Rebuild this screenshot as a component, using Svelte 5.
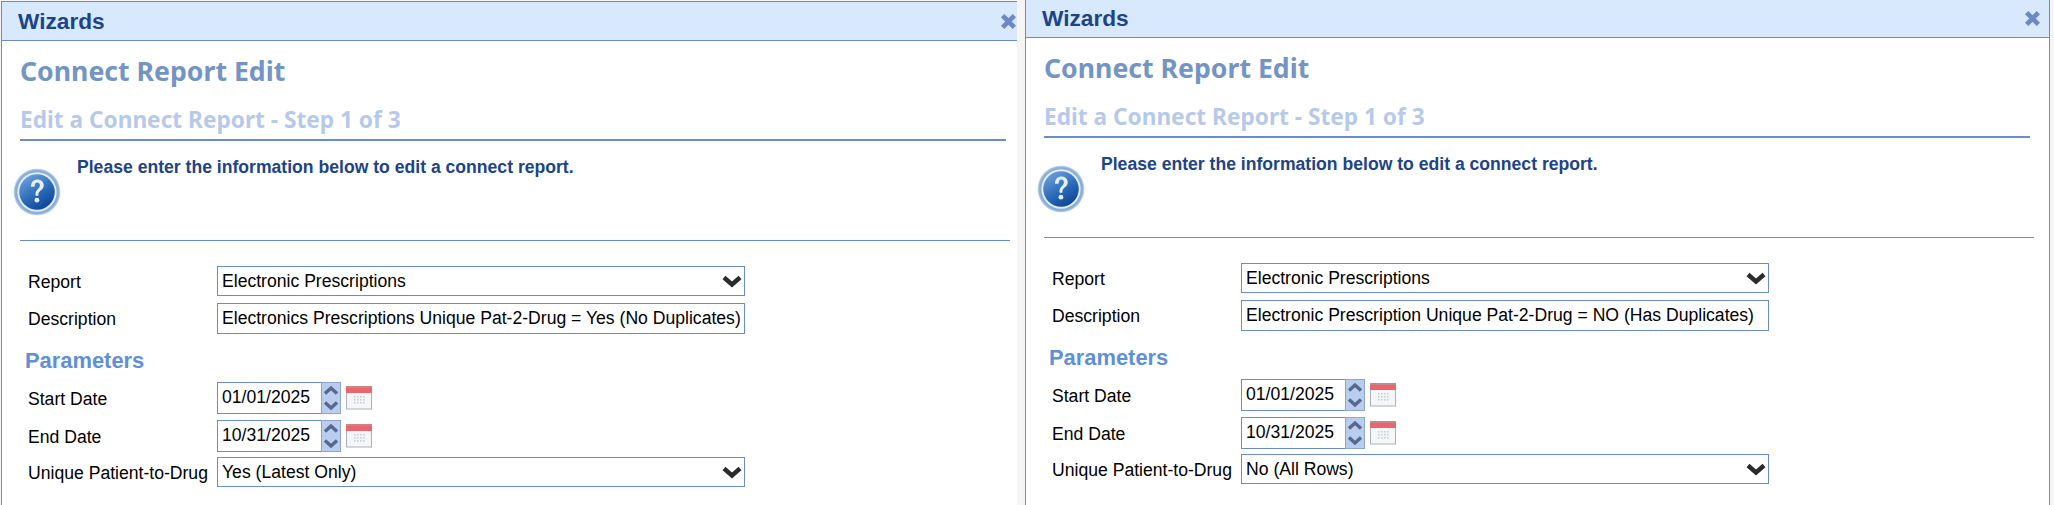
<script>
  const panels = [
    {
      description: 'Electronics Prescriptions Unique Pat-2-Drug = Yes (No Duplicates)',
      unique: 'Yes (Latest Only)',
      shifted: false
    },
    {
      description: 'Electronic Prescription Unique Pat-2-Drug = NO (Has Duplicates)',
      unique: 'No (All Rows)',
      shifted: true
    }
  ];
</script>

{#snippet chevron()}
  <svg class="chevron" viewBox="0 0 20 14" width="20" height="14">
    <path d="M2 3.5 L10 10.5 L18 3.5" fill="none" stroke="#2b2b2b" stroke-width="4.4" />
  </svg>
{/snippet}

{#snippet dateField(label, value, rowClass)}
  <div class="row {rowClass}">
    <span class="label">{label}</span>
    <div class="date">
      <span class="date-value">{value}</span>
      <div class="spin">
        <span class="spin-btn">
          <svg viewBox="0 0 16 14" width="16" height="14"><path d="M2 10.5 L8 5 L14 10.5" fill="none" stroke="#55698f" stroke-width="3.4" /></svg>
        </span>
        <span class="spin-btn">
          <svg viewBox="0 0 16 14" width="16" height="14"><path d="M2 3.5 L8 9 L14 3.5" fill="none" stroke="#55698f" stroke-width="3.4" /></svg>
        </span>
      </div>
    </div>
    <svg class="calendar" viewBox="0 0 26 24" width="26" height="24">
      <rect x="0.5" y="0.5" width="25" height="22.5" fill="#f4f6f8" stroke="#a9b2ba" />
      <rect x="0" y="0" width="26" height="2" fill="#c9868a" />
      <rect x="0" y="2" width="26" height="5" fill="#e8666c" />
      <g fill="#c3cfdd">
        {#each [10, 13, 16] as y}
          {#each [8, 11, 14, 17] as x}
            <rect x={x} y={y} width="1.6" height="1.6" />
          {/each}
        {/each}
      </g>
    </svg>
  </div>
{/snippet}

<div class="page">
  {#each panels as panel}
    <section class="panel" class:shifted={panel.shifted}>
      <header class="bar">
        <span class="bar-title">Wizards</span>
        <svg class="close" viewBox="0 0 16 16" width="17" height="17">
          <path d="M2.5 2.5 L13.5 13.5 M13.5 2.5 L2.5 13.5" stroke="#6d88c8" stroke-width="4.4" />
        </svg>
      </header>

      <div class="body">
        <h1>Connect Report Edit</h1>
        <h2>Edit a Connect Report - Step 1 of 3</h2>

        <div class="intro">
          <svg class="help" viewBox="0 0 50 50" width="48" height="48">
            <defs>
              <radialGradient id="ring" cx="50%" cy="50%" r="50%">
                <stop offset="0.8" stop-color="#7fa6d6" />
                <stop offset="0.93" stop-color="#8fb3dc" />
                <stop offset="1" stop-color="#dfe7ef" />
              </radialGradient>
              <linearGradient id="ball" x1="0.2" y1="0" x2="0.8" y2="1">
                <stop offset="0" stop-color="#6ea3dc" />
                <stop offset="0.55" stop-color="#2a69b8" />
                <stop offset="1" stop-color="#0b3f94" />
              </linearGradient>
            </defs>
            <circle cx="25" cy="25" r="24.5" fill="url(#ring)" />
            <circle cx="25" cy="25" r="20.5" fill="#e4edf6" />
            <circle cx="25" cy="25" r="18.5" fill="url(#ball)" />
            <path d="M18.6 19.5 C19 14 22 12 25.4 12 C29.4 12 32 14.6 32 18 C32 21.4 29.6 22.8 27.8 24.4 C26.6 25.5 26.4 26.8 26.4 29 L23.4 29 C23.3 26 23.7 24.2 25.2 22.6 C26.7 21 28 20.2 28 18 C28 16.2 27 15 25.2 15 C23.4 15 22.6 16.6 22.4 19.5 Z" fill="#e6eef8" />
            <circle cx="24.9" cy="33.5" r="2.5" fill="#e6eef8" />
          </svg>
          <p>Please enter the information below to edit a connect report.</p>
        </div>

        <div class="form">
          <div class="row row-report">
            <span class="label">Report</span>
            <div class="select">Electronic Prescriptions {@render chevron()}</div>
          </div>
          <div class="row row-description">
            <span class="label">Description</span>
            <div class="input">{panel.description}</div>
          </div>
          <h3>Parameters</h3>
          {@render dateField('Start Date', '01/01/2025', 'row-start')}
          {@render dateField('End Date', '10/31/2025', 'row-end')}
          <div class="row row-unique">
            <span class="label">Unique Patient-to-Drug</span>
            <div class="select">{panel.unique} {@render chevron()}</div>
          </div>
        </div>
      </div>
    </section>
  {/each}
</div>

<style>
  :global(body) {
    background: #f5f5f5;
  }
  .page {
    display: grid;
    grid-template-columns: 1016px 1025px;
    column-gap: 8px;
    padding-left: 1px;
    height: 505px;
    overflow: hidden;
    font-family: "Liberation Sans", Arial, sans-serif;
    font-size: 17.6px;
    color: #000;
  }
  .panel {
    background: #fff;
    margin-top: 1px;
    height: 520px;
    overflow: hidden;
    box-sizing: border-box;
    width: 100%;
  }
  .panel.shifted {
    margin-top: -2px;
  }
  .bar,
  .body {
    box-sizing: border-box;
    width: 1025px;
    border-left: 1px solid #6b8bcd;
    border-right: 1px solid #6b8bcd;
  }
  .bar {
    height: 40px;
    background: #d8e8fd;
    border-top: 1px solid #6b8bcd;
    border-bottom: 1px solid #6b8bcd;
    display: flex;
    align-items: center;
    justify-content: space-between;
    padding: 0 0 0 16px;
  }
  .bar-title {
    font-size: 22.67px;
    font-weight: bold;
    color: #1c4487;
  }
  .close {
    margin-right: 8px;
  }
  .body {
    height: 480px;
    padding: 0 0 0 18px;
  }
  h1 {
    margin: 0;
    padding-top: 13px;
    font-family: "Noto Sans", sans-serif;
    font-size: 26.67px;
    line-height: 34px;
    font-weight: bold;
    color: #7394c4;
  }
  h2 {
    box-sizing: content-box;
    width: 986px;
    margin: 0;
    padding-top: 17px;
    height: 34px;
    font-family: "Noto Sans", sans-serif;
    font-size: 22.67px;
    line-height: 30px;
    font-weight: bold;
    color: #b7c9ea;
    border-bottom: 2px solid #6b8bcd;
  }
  .intro {
    width: 990px;
    height: 99px;
    border-bottom: 1px solid #6b8bcd;
    display: flex;
    align-items: flex-start;
  }
  .help {
    margin: 27px 0 0 -7px;
    flex: none;
  }
  .intro p {
    margin: 16px 0 0 16px;
    font-size: 17.6px;
    font-weight: bold;
    line-height: 20px;
    color: #1c4487;
  }
  .form {
    padding-left: 8px;
  }
  .row {
    display: flex;
    align-items: center;
  }
  .label {
    width: 189px;
    flex: none;
    padding-top: 2px;
  }
  .row-report {
    margin-top: 25px;
  }
  .row-description {
    margin-top: 7px;
  }
  .select,
  .input {
    box-sizing: border-box;
    width: 528px;
    height: 30px;
    border: 1px solid #6b8bcd;
    background: #fff;
    padding: 0 2px 0 4px;
    display: flex;
    align-items: center;
    justify-content: space-between;
    white-space: nowrap;
  }
  .input {
    height: 31px;
  }
  h3 {
    margin: 0;
    padding-top: 15px;
    margin-left: -3px;
    height: 33px;
    font-size: 21.9px;
    line-height: 24px;
    font-weight: bold;
    color: #5f8fd8;
  }
  .date {
    box-sizing: border-box;
    display: flex;
    width: 124px;
    height: 32px;
    border: 1px solid #6b8bcd;
  }
  .date-value {
    flex: 1;
    padding-left: 4px;
    line-height: 28px;
  }
  .spin {
    box-sizing: border-box;
    width: 18px;
    flex: none;
    background: #b9cdef;
    outline: 1px solid #8ea5cd;
    display: flex;
    flex-direction: column;
    gap: 1px;
  }
  .spin-btn {
    flex: 1;
    display: flex;
    align-items: center;
    justify-content: center;
    overflow: hidden;
  }
  .calendar {
    margin-left: 5px;
  }
  .row-start {
    margin-top: 0;
  }
  .row-end {
    margin-top: 6px;
  }
  .row-unique {
    margin-top: 5px;
  }
</style>
